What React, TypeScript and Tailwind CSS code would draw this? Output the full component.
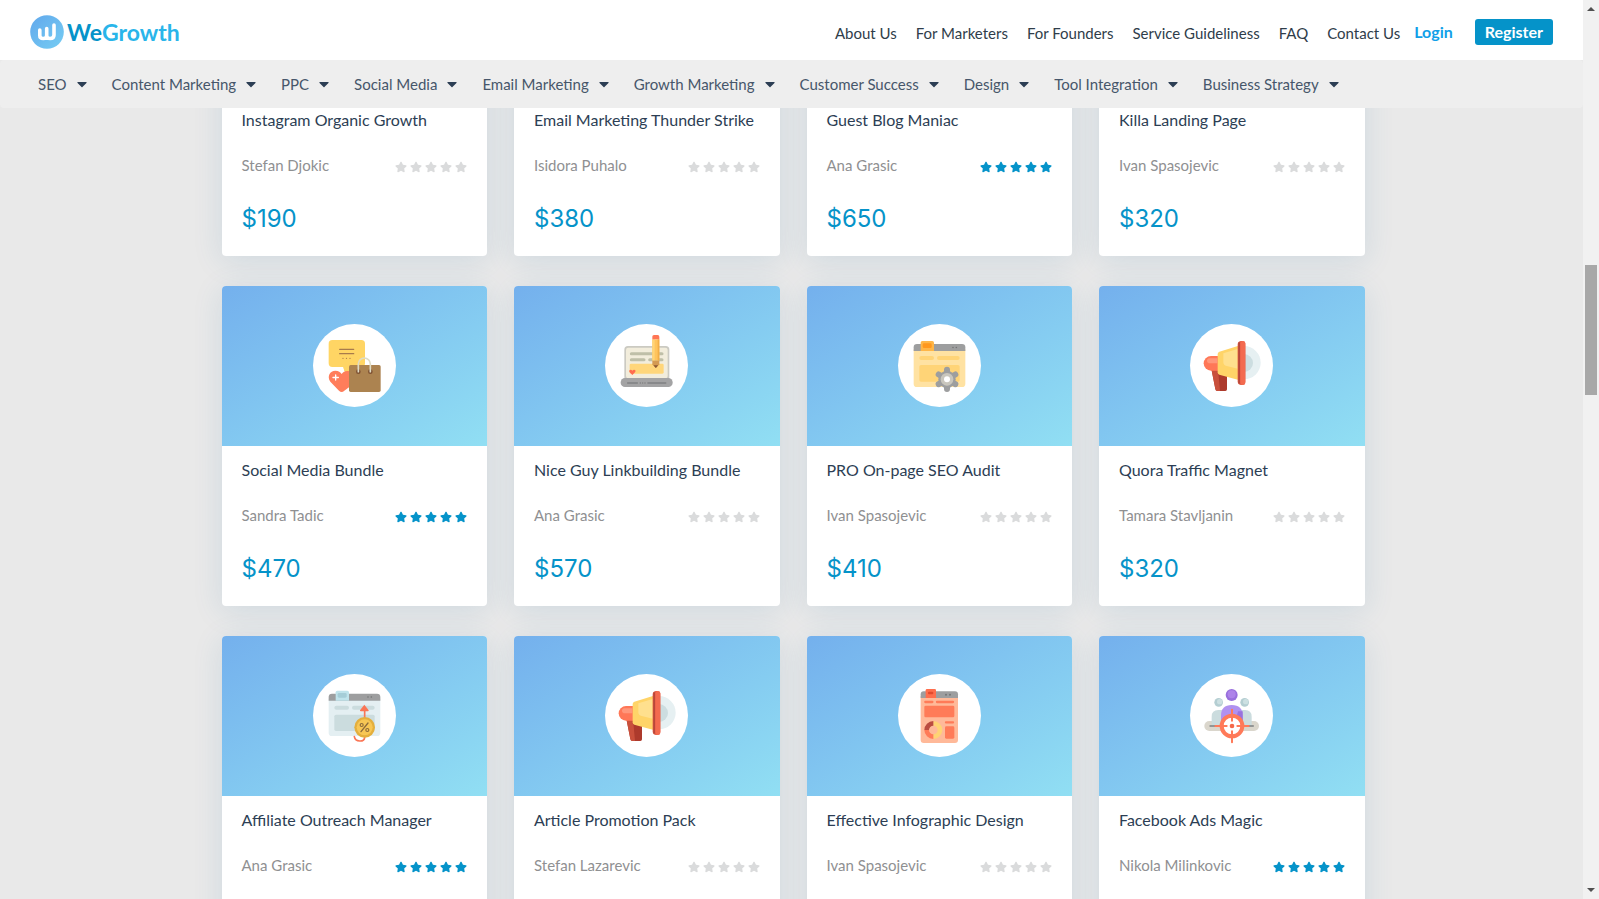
import React from "react";
import { FaStar, FaCaretDown } from "react-icons/fa";

const topLinks = [
  "About Us",
  "For Marketers",
  "For Founders",
  "Service Guideliness",
  "FAQ",
  "Contact Us",
];

const categories = [
  "SEO",
  "Content Marketing",
  "PPC",
  "Social Media",
  "Email Marketing",
  "Growth Marketing",
  "Customer Success",
  "Design",
  "Tool Integration",
  "Business Strategy",
];

const BundleIcon = () => (
  <svg viewBox="39 42 249 249" className="w-full h-full">
    <path
      d="M97 90H184Q195 90 195 101V160Q195 171 184 171H150V192Q132 190 130 171H97Q86 171 86 160V101Q86 90 97 90Z"
      fill="#ffd564"
    />
    <path d="M130 171H160V205Q134 197 130 171Z" fill="#ffd564" />
    <path d="M119 118H161M119 131H161" stroke="#a87b4b" strokeWidth="4" strokeLinecap="round" />
    <path d="M129 145H153" stroke="#a87b4b" strokeWidth="4" strokeLinecap="round" strokeDasharray="0 10.500" />
    <path
      d="M125 246Q121 246 117 242L91 215C80 199 90 182 106 182C116 182 121 187 125 192C130 185 138 181 148 184V231L133 242Q129 246 125 246Z"
      fill="#ff7d5b"
    />
    <path d="M107 195V210M99 202.500H115" stroke="#fff" strokeWidth="4" strokeLinecap="round" />
    <rect x="147" y="165" width="95" height="81" rx="5" fill="#ac8350" />
    <circle cx="175" cy="185" r="7" fill="#7f5233" />
    <circle cx="211" cy="185" r="7" fill="#7f5233" />
    <path d="M175 185V162A18 18 0 0 1 211 162V185" fill="none" stroke="#dfdcc5" strokeWidth="5" strokeLinecap="round" />
  </svg>
);

const LaptopIcon = () => (
  <svg viewBox="46 42 249 249" className="w-full h-full">
    <rect x="104" y="108" width="135" height="104" rx="11" fill="#cbcac2" />
    <rect x="109" y="113" width="125" height="92" rx="7" fill="#f2eddc" />
    <path d="M125 131H217M125 149H163M180 149H217" stroke="#bfbfa8" strokeWidth="9" strokeLinecap="round" />
    <rect x="120" y="161" width="102" height="30" rx="4" fill="#ffd67a" />
    <path d="M128 195L120 187C115 181 124 176 128 182C132 176 142 180 136 187Z" fill="#ff6c50" />
    <rect x="93" y="204" width="156" height="27" rx="13" fill="#a3a3a4" />
    <path d="M114 219H143M175 219H228" stroke="#808182" strokeWidth="5" strokeLinecap="round" />
    <path d="M152 219H168" stroke="#808182" strokeWidth="5" strokeLinecap="round" strokeDasharray="0 7" />
    <path d="M188 88H209V152H188Z" fill="#ffc45d" />
    <path d="M188 88H195V152H188Z" fill="#ffd477" />
    <path d="M204 88H209V152H204Z" fill="#f2ae46" />
    <path d="M188 88V80Q188 75 193 75H204Q209 75 209 80V88Z" fill="#ff7655" />
    <path d="M188 152H209V163L198.500 174L188 163Z" fill="#d49a52" />
    <path d="M191 166H206L198.500 174Z" fill="#8c5934" />
  </svg>
);

const AuditIcon = () => (
  <svg viewBox="39 42 249 249" className="w-full h-full">
    <path d="M86 118H241V221Q241 231 231 231H96Q86 231 86 221Z" fill="#ffe2a2" />
    <path d="M86 123V112Q86 102 96 102H231Q241 102 241 112V123Z" fill="#9d9e9f" />
    <path d="M204 112.500H224" stroke="#747576" strokeWidth="5" strokeLinecap="round" strokeDasharray="0 10" />
    <path d="M107 123V98Q107 93 112 93H142Q147 93 147 98V123Z" fill="#ffb647" />
    <rect x="113" y="100" width="27" height="14" rx="4" fill="#ff981d" />
    <path d="M109 144H141M162 144H218" stroke="#ffd477" strokeWidth="12" strokeLinecap="round" />
    <rect x="103" y="165" width="121" height="50" rx="5" fill="#ffd477" />
    <path
      d="M186 179V237M161 193.500L211 222.500M211 193.500L161 222.500"
      stroke="#9d9e9f"
      strokeWidth="18"
      strokeLinecap="round"
    />
    <circle cx="186" cy="208" r="26" fill="#9d9e9f" />
    <circle cx="186" cy="208" r="19" fill="#c9c6bd" />
    <circle cx="186" cy="208" r="9" fill="#fff" />
  </svg>
);

const MegaphoneIcon = () => (
  <svg viewBox="46 42 249 249" className="w-full h-full">
    <path d="M208 108A50 50 0 0 1 208 208Z" fill="#e6f0f2" />
    <path d="M208 132A27 27 0 0 1 208 186Z" fill="#ccdde0" />
    <path d="M110 176H157V238Q157 243 152 243H128Q123 243 122 237Z" fill="#ad3a2c" />
    <path d="M110 176H130L136 243H128Q123 243 122 237Z" fill="#c9503c" />
    <path d="M131 138V182H109A22 22 0 0 1 109 138Z" fill="#ff7757" />
    <path d="M128 145V160H102A8 8 0 0 1 102 145Z" fill="#ff977b" />
    <path d="M129 132Q129 127 134 125L192 107V210L134 194Q129 192 129 187Z" fill="#ffd468" />
    <path d="M146 130L189 117V176L156 168Q146 165 146 156Z" fill="#ffe08e" />
    <rect x="189" y="93" width="23" height="132" rx="11" fill="#de5942" />
    <rect x="197" y="93" width="15" height="132" rx="7" fill="#f36a4f" />
    <rect x="191" y="97" width="5" height="124" rx="2" fill="#b8473a" />
  </svg>
);

const AffiliateIcon = () => (
  <svg viewBox="39 42 249 249" className="w-full h-full">
    <path d="M86 116H241V218Q241 228 231 228H96Q86 228 86 218Z" fill="#e4eff2" />
    <path d="M86 122V111Q86 101 96 101H231Q241 101 241 111V122Z" fill="#9d9e9f" />
    <path d="M204 111H224" stroke="#747576" strokeWidth="5" strokeLinecap="round" strokeDasharray="0 10" />
    <path d="M107 122V97Q107 92 112 92H142Q147 92 147 97V122Z" fill="#bfe3eb" />
    <rect x="113" y="99" width="27" height="14" rx="4" fill="#a5cdd7" />
    <path d="M109 143H141M162 143H218" stroke="#cbdcde" strokeWidth="12" strokeLinecap="round" />
    <rect x="103" y="164" width="121" height="49" rx="5" fill="#cbdcde" />
    <path d="M163 230C166 247 193 247 194 232V148" fill="none" stroke="#fa7555" strokeWidth="5" strokeLinecap="round" />
    <path d="M193 134L206 151Q207 154 203 154H183Q179 154 180 151Z" fill="#fa7555" />
    <circle cx="194" cy="202" r="31" fill="#e4af3d" />
    <circle cx="194" cy="202" r="24" fill="#f8c755" />
    <path d="M204 189L183 215" stroke="#8d6b3b" strokeWidth="4" strokeLinecap="round" />
    <circle cx="185" cy="195" r="4.500" fill="none" stroke="#8d6b3b" strokeWidth="3.500" />
    <circle cx="202" cy="210" r="4.500" fill="none" stroke="#8d6b3b" strokeWidth="3.500" />
  </svg>
);

const InfographicIcon = () => (
  <svg viewBox="39 42 249 249" className="w-full h-full">
    <path d="M107 108H219V240Q219 249 210 249H116Q107 249 107 240Z" fill="#ffb999" />
    <path d="M107 114V103Q107 94 116 94H210Q219 94 219 103V114Z" fill="#9d9e9f" />
    <path d="M183 104.500H207" stroke="#747576" strokeWidth="6" strokeLinecap="round" strokeDasharray="0 12" />
    <path d="M122 114V91Q122 87 126 87H149Q153 87 153 91V114Z" fill="#ff6e4d" />
    <rect x="129" y="95" width="16" height="8" rx="3" fill="#e34a2e" />
    <path d="M121 126H142M156 126H204M183 187H204" stroke="#ff7b58" strokeWidth="7" strokeLinecap="round" />
    <rect x="118" y="137" width="90" height="35" rx="4" fill="#ff7b58" />
    <rect x="180" y="199" width="28" height="37" rx="4" fill="#ff7b58" />
    <g fill="none" strokeWidth="14">
      <path d="M145 190A20 20 0 0 1 145 230" stroke="#ffd374" />
      <path d="M145 230A20 20 0 0 1 125 210" stroke="#ff7b58" />
      <path d="M125 210A20 20 0 0 1 145 190" stroke="#bb4c40" />
    </g>
  </svg>
);

const TargetIcon = () => (
  <svg viewBox="46 42 249 249" className="w-full h-full">
    <rect x="89" y="183" width="164" height="30" rx="15" fill="#dad6cc" />
    <circle cx="132" cy="127" r="13" fill="#b4ced2" />
    <circle cx="135" cy="125" r="8" fill="#cce0e2" />
    <circle cx="210" cy="127" r="13" fill="#b4ced2" />
    <circle cx="213" cy="125" r="8" fill="#cce0e2" />
    <path d="M111 198V170Q111 150 131 150H142V198ZM231 198V170Q231 150 211 150H200V198Z" fill="#cbdcde" />
    <path d="M106 198H236" stroke="#7d8081" strokeWidth="4" strokeLinecap="round" />
    <path d="M139 198V167Q139 135 171 135Q204 135 204 167V198Z" fill="#b091f0" />
    <path d="M190 154H204V180H183Z" fill="#9873dc" />
    <circle cx="171" cy="105" r="18" fill="#986fdd" />
    <circle cx="171" cy="103" r="12" fill="#ad83e9" />
    <circle cx="172" cy="198" r="31" fill="#fff" stroke="#ff7a59" strokeWidth="12" />
    <path d="M172 149V182M172 214V247M122 198H156M188 198H222" stroke="#ff7a59" strokeWidth="6" strokeLinecap="round" />
    <circle cx="172" cy="198" r="7" fill="#f4694b" />
  </svg>
);

type Service = {
  title: string;
  author: string;
  rated?: boolean;
  price?: string;
  icon?: React.ReactNode;
};

const services: Service[] = [
  { title: "Instagram Organic Growth", author: "Stefan Djokic", price: "$190" },
  { title: "Email Marketing Thunder Strike", author: "Isidora Puhalo", price: "$380" },
  { title: "Guest Blog Maniac", author: "Ana Grasic", rated: true, price: "$650" },
  { title: "Killa Landing Page", author: "Ivan Spasojevic", price: "$320" },
  { title: "Social Media Bundle", author: "Sandra Tadic", rated: true, price: "$470", icon: <BundleIcon /> },
  { title: "Nice Guy Linkbuilding Bundle", author: "Ana Grasic", price: "$570", icon: <LaptopIcon /> },
  { title: "PRO On-page SEO Audit", author: "Ivan Spasojevic", price: "$410", icon: <AuditIcon /> },
  { title: "Quora Traffic Magnet", author: "Tamara Stavljanin", price: "$320", icon: <MegaphoneIcon /> },
  { title: "Affiliate Outreach Manager", author: "Ana Grasic", rated: true, icon: <AffiliateIcon /> },
  { title: "Article Promotion Pack", author: "Stefan Lazarevic", icon: <MegaphoneIcon /> },
  { title: "Effective Infographic Design", author: "Ivan Spasojevic", icon: <InfographicIcon /> },
  { title: "Facebook Ads Magic", author: "Nikola Milinkovic", rated: true, icon: <TargetIcon /> },
];

const Logo = () => (
  <a href="#" className="flex items-center gap-[3px]">
    <svg viewBox="0 0 34 34" className="size-[34px]">
      <defs>
        <linearGradient id="logo" x1="0" y1="0" x2="1" y2="1">
          <stop offset="0" stopColor="#61a8ec" />
          <stop offset="1" stopColor="#76cdf3" />
        </linearGradient>
      </defs>
      <circle cx="17" cy="17" r="16.800" fill="url(#logo)" />
      <path
        d="M9.800 15V20.500Q9.800 23.500 13.200 23.500Q16.700 23.500 16.700 20.500V13.500V20.500Q16.700 23.500 20.200 23.500Q24 23.500 24 20V10"
        fill="none"
        stroke="#fff"
        strokeWidth="3.600"
        strokeLinecap="round"
        strokeLinejoin="round"
      />
    </svg>
    <span className="text-[23px] leading-8 font-bold text-[#0593c9]">
      We<span className="text-[#29b5ea]">Growth</span>
    </span>
  </a>
);

const Stars = ({ rated }: { rated?: boolean }) => (
  <div className={`flex gap-[3px] pt-1 ${rated ? "text-[#0593c9]" : "text-[#dadbdc]"}`}>
    {[1, 2, 3, 4, 5].map((n) => (
      <FaStar key={n} className="size-3" />
    ))}
  </div>
);

const Card = ({ service }: { service: Service }) => (
  <article className="flex flex-col min-h-80 rounded bg-white shadow-[0_5px_30px_rgba(30,110,160,0.13)]">
    <div className="flex h-40 items-center justify-center rounded-t bg-linear-to-br from-[#74b0ed] to-[#91dff3] pb-px">
      {service.icon && <div className="size-[83px] rounded-full bg-white">{service.icon}</div>}
    </div>
    <div className="flex flex-col px-5 pt-3">
      <h2 className="text-base leading-6 text-[#2c3e54]">{service.title}</h2>
      <div className="mt-[21px] flex items-center justify-between">
        <p className="text-[15px] leading-6 text-[#8f9092]">{service.author}</p>
        <Stars rated={service.rated} />
      </div>
      {service.price && (
        <p className="mt-[26px] font-['Inter',sans-serif] text-2xl leading-8 text-[#0593c9]">{service.price}</p>
      )}
    </div>
  </article>
);

const ScrollRail = () => (
  <div className="flex w-4 shrink-0 flex-col items-center bg-[#f1f1f1] px-[2px] py-[7px]">
    <svg viewBox="0 0 8 4" className="h-1 w-2">
      <path d="M0 4L4 0L8 4Z" fill="#505050" />
    </svg>
    <div className="flex w-full flex-1 flex-col">
      <div className="flex-[254]" />
      <div className="flex-[130] bg-[#a8a8a8]" />
      <div className="flex-[493]" />
    </div>
    <svg viewBox="0 0 8 4" className="h-1 w-2">
      <path d="M0 0L4 4L8 0Z" fill="#505050" />
    </svg>
  </div>
);

const App = () => {
  return (
    <div className="flex h-screen bg-[#e9e9e9] font-['Lato','Liberation_Sans',sans-serif]">
      <div className="flex min-w-0 flex-1 flex-col">
        <header className="z-10 flex h-15 shrink-0 items-center justify-between bg-white px-[30px] pt-[3px]">
          <Logo />
          <div className="flex items-center">
            <nav className="flex gap-[19px] pt-[2px] text-[15px] leading-6 text-[#2f3d4a]">
              {topLinks.map((link) => (
                <a key={link} href="#">
                  {link}
                </a>
              ))}
            </nav>
            <a href="#" className="ml-[14px] text-base leading-6 font-bold text-[#119fe8]">
              Login
            </a>
            <button className="ml-[22px] h-[26px] rounded-[3px] bg-[#0593c9] px-[10px] text-base leading-6 font-bold text-white">
              Register
            </button>
          </div>
        </header>
        <nav className="z-10 flex h-12 shrink-0 items-center gap-[25px] rounded bg-[#eeeeee] pl-[38px] text-[15px] leading-6 text-[#46566a]">
          {categories.map((category) => (
            <button key={category} className="flex items-center gap-[10px] whitespace-nowrap">
              {category}
              <FaCaretDown className="h-4 w-[10px] text-[#2c3e54]" />
            </button>
          ))}
        </nav>
        <main className="min-h-0 flex-1 overflow-hidden pl-[3px]">
          {/* list is scrolled part way through the first row */}
          <div className="mx-auto -mt-[172px] grid max-w-[1143px] grid-cols-4 gap-x-[27px] gap-y-[30px]">
            {services.map((service) => (
              <Card key={service.title} service={service} />
            ))}
          </div>
        </main>
      </div>
      <ScrollRail />
    </div>
  );
};

export default App;
